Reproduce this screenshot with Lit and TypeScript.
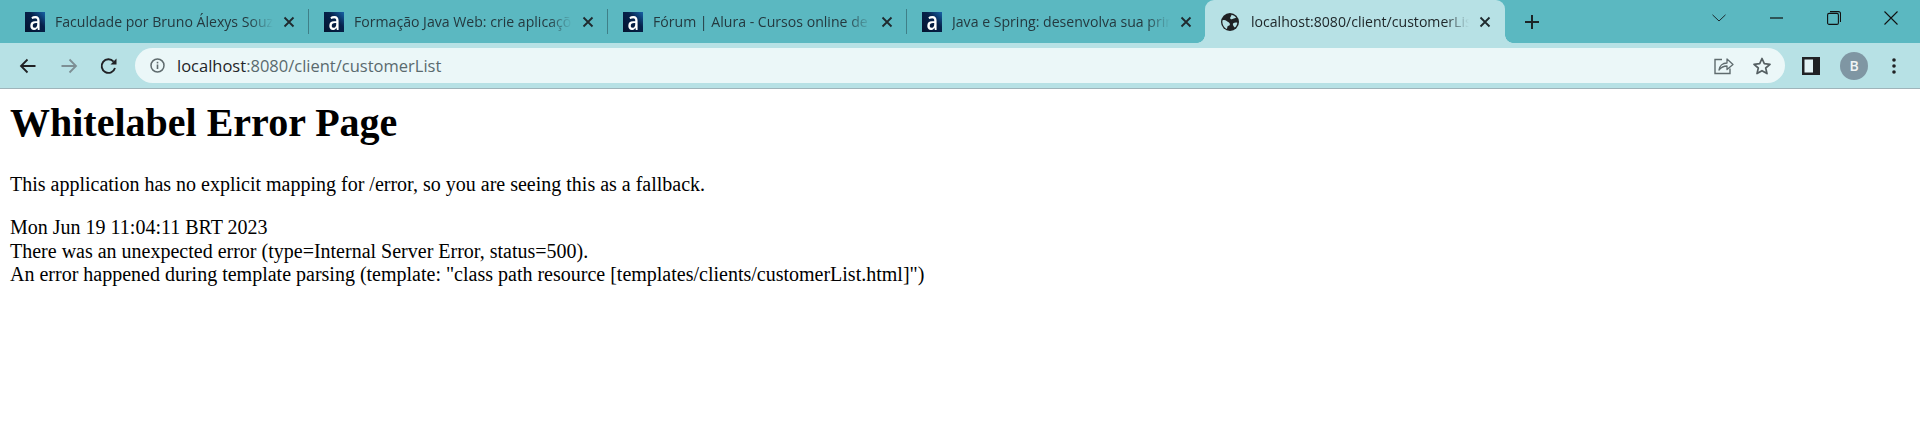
import { LitElement, html, css } from "lit";
import { customElement } from "lit/decorators.js";

const favicon = html`<span class="fav"><span class="fav-a">a</span></span>`;
const closeX = html`<svg class="x" width="12" height="12" viewBox="0 0 12 12"><path d="M1.5 1.5l9 9M10.5 1.5l-9 9" stroke="#1f2a2e" stroke-width="1.8" fill="none"/></svg>`;
const globe = html`<svg class="globe" width="18" height="18" viewBox="0 0 18 18"><circle cx="9" cy="9" r="9" fill="#202124"/><path d="M1.4 7.4c1.600-.7 3.100-.4 4.300.7 1.200 1.100 2.900 1.500 3.200 2.900.2 1.300-1 1.900-2 2-.7.700-.6 2-1 3C3 14.600 1 11 1.400 7.400zM10.500 1.700c1.900.4 3.600 1.500 4.700 3.100-1 .4-2.200.4-3.100 1-.9.600-2.100.6-2.700-.1-.5-.7-.2-1.300.3-2 .4-.6.700-1.200.8-2zM12 10.400c1.100-.8 2.900-1.300 4.300-.7-.2 2-1.100 3.700-2.600 4.900-.7-1-2.400-3-1.700-4.200z" fill="#b7e1e5"/></svg>`;

@customElement("app-root")
export class AppRoot extends LitElement {
  static styles = css`
    :host { display: block; height: 424px; background: #fff; overflow: hidden; color: #000; }
    .strip { height: 43px; background: #5bb8c1; display: flex; align-items: stretch; padding-left: 10px; box-sizing: border-box; font-family: "Open Sans", "Noto Sans", sans-serif; }
    .tab { flex: none; width: 298px; box-sizing: border-box; padding: 0 13px 0 15px; display: flex; align-items: center; gap: 10px; color: #24393f; position: relative; }
    .tab.active { width: 300px; padding: 0 14px 0 16px; gap: 12px; background: #b7e1e5; border-radius: 9px 9px 0 0; color: #20282b; }
    .tab.active .x { margin-left: -2px; }
    .tab.active::before, .tab.active::after { content: ""; position: absolute; bottom: 0; width: 8px; height: 8px; }
    .tab.active::before { left: -8px; background: radial-gradient(circle at 0 0, transparent 7.5px, #b7e1e5 8px); }
    .tab.active::after { right: -8px; background: radial-gradient(circle at 100% 0, transparent 7.5px, #b7e1e5 8px); }
    .sep { flex: none; width: 1px; height: 25px; margin-top: 9px; background: #3f7f88; }
    .title { flex: 1; min-width: 0; white-space: nowrap; overflow: hidden; font-size: 14.1px; line-height: 43px; -webkit-mask-image: linear-gradient(to right, #000 calc(100% - 24px), transparent 100%); mask-image: linear-gradient(to right, #000 calc(100% - 24px), transparent 100%); }
    .fav { flex: none; width: 20px; height: 20px; overflow: hidden; display: flex; align-items: center; justify-content: center; background: linear-gradient(45deg, #04132f 0%, #06214a 60%, #1763a8 100%); }
    .fav-a { color: #fff; font: 600 25px/20px "Open Sans", sans-serif; transform: scaleX(.8); margin-top: -3px; }
    .x { flex: none; }
    .plus { flex: none; margin: 0 0 0 20px; align-self: center; display: flex; }
    .spacer { flex: 1; }
    .win { display: flex; align-items: flex-start; }
    .win-b { width: 57.5px; height: 36px; display: flex; align-items: center; justify-content: center; }
    .bar { height: 45px; background: #b7e1e5; display: flex; align-items: center; box-sizing: border-box; position: relative; }
    .nav { display: flex; align-items: center; width: 135px; box-sizing: border-box; padding-left: 19px; flex: none; }
    .fwd { margin-left: 25px; }
    .rel { margin-left: 21.5px; }
    .omni { flex: none; width: 1650px; height: 35px; background: #ebf7f8; border-radius: 18px; display: flex; align-items: center; box-sizing: border-box; padding-left: 15px; }
    .url { margin-left: 12px; font: 16.5px/35px "Open Sans", "Noto Sans", sans-serif; color: #5a6a6e; white-space: nowrap; }
    .url b { font-weight: 400; color: #1f2528; }
    .omni-r { margin-left: auto; display: flex; align-items: center; gap: 19px; padding-right: 14px; }
    .tools { display: flex; align-items: center; flex: 1; padding-left: 17px; }
    .avatar { width: 28px; height: 28px; border-radius: 50%; background: #7f96a3; color: #f1f5f6; display: flex; align-items: center; justify-content: center; font: 600 14px "Open Sans", sans-serif; margin-left: 20px; }
    .dots { margin-left: 24px; display: flex; }
    .rule { height: 1px; background: #9fb4ba; }
    .page { padding: 11px 10px 10px; font-family: "Liberation Serif", "Times New Roman", serif; font-size: 20px; line-height: 23.4px; }
    h1 { margin: 0 0 26.8px; font-size: 40px; line-height: 46px; font-weight: 700; }
    p { margin: 20px 0; }
  `;

  render() {
    return html`
      <div class="strip">
        <div class="tab">${favicon}<span class="title">Faculdade por Bruno Álexys Souza</span>${closeX}</div>
        <span class="sep"></span>
        <div class="tab">${favicon}<span class="title">Formação Java Web: crie aplicações</span>${closeX}</div>
        <span class="sep"></span>
        <div class="tab">${favicon}<span class="title">Fórum | Alura - Cursos online de tecnologia</span>${closeX}</div>
        <span class="sep"></span>
        <div class="tab">${favicon}<span class="title">Java e Spring: desenvolva sua primeira</span>${closeX}</div>
        <div class="tab active">${globe}<span class="title">localhost:8080/client/customerList</span>${closeX}</div>
        <span class="plus"><svg width="14" height="14" viewBox="0 0 14 14"><path d="M7 0v14M0 7h14" stroke="#1c2528" stroke-width="2" fill="none"/></svg></span>
        <span class="spacer"></span>
        <div class="win">
          <span class="win-b"><svg width="14" height="8" viewBox="0 0 14 8"><path d="M.5.8L7 7l6.5-6.2" stroke="#1b2b30" fill="none"/></svg></span>
          <span class="win-b"><svg width="13" height="2" viewBox="0 0 13 2"><path d="M0 1h13" stroke="#111" stroke-width="1.2" fill="none"/></svg></span>
          <span class="win-b"><svg width="14" height="14" viewBox="0 0 14 14"><rect x=".6" y="2.4" width="10.8" height="11" rx="1.5" stroke="#111" stroke-width="1.1" fill="none"/><path d="M3 .6h8.5a2 2 0 0 1 2 2V11" stroke="#111" stroke-width="1.1" fill="none"/></svg></span>
          <span class="win-b"><svg width="14" height="14" viewBox="0 0 14 14"><path d="M.5.5l13 13M13.5.5l-13 13" stroke="#111" stroke-width="1.1" fill="none"/></svg></span>
        </div>
      </div>
      <div class="bar">
        <div class="nav">
          <svg width="17" height="16" viewBox="0 0 17 16"><path d="M16.5 8H2M8.5 1.5L2 8l6.5 6.5" stroke="#202124" stroke-width="1.8" fill="none"/></svg>
          <svg class="fwd" width="17" height="16" viewBox="0 0 17 16"><path d="M.5 8H15M8.5 1.5L15 8l-6.5 6.5" stroke="#7d8f94" stroke-width="1.8" fill="none"/></svg>
          <svg class="rel" width="18" height="18" viewBox="0 0 18 18"><path d="M15 11a6.8 6.8 0 1 1-1.4-6.4" stroke="#202124" stroke-width="1.9" fill="none"/><path d="M16.5 1.5v6h-6z" fill="#202124"/></svg>
        </div>
        <div class="omni">
          <svg width="15" height="15" viewBox="0 0 15 15"><circle cx="7.5" cy="7.5" r="6.5" stroke="#5f6b6e" stroke-width="1.5" fill="none"/><rect x="6.7" y="6.5" width="1.6" height="4.5" fill="#5f6b6e"/><rect x="6.7" y="3.8" width="1.6" height="1.6" fill="#5f6b6e"/></svg>
          <span class="url"><b>localhost</b>:8080/client/customerList</span>
          <div class="omni-r">
            <svg width="20" height="19" viewBox="0 0 20 19"><path d="M8 3.5H1v14h15v-5" stroke="#5f6b6e" stroke-width="1.4" fill="none"/><path d="M5 14c.5-4 3.5-7 8-7V3l6 5.5-6 5V10c-3.5 0-6 1.5-8 4z" stroke="#5f6b6e" stroke-width="1.3" fill="none" stroke-linejoin="round"/></svg>
            <svg width="18" height="18" viewBox="0 0 18 18"><path d="M9 1.5l2.3 5.2 5.700.6-4.300 3.700 1.300 5.600L9 13.700 4 16.600l1.300-5.600L1 7.300l5.700-.6z" stroke="#555f62" stroke-width="1.7" fill="none" stroke-linejoin="round"/></svg>
          </div>
        </div>
        <div class="tools">
          <svg width="18" height="18" viewBox="0 0 18 18"><rect width="18" height="18" fill="#202124"/><rect x="2.5" y="2.5" width="8.5" height="13" fill="#e3f3f5"/></svg>
          <span class="avatar">B</span>
          <span class="dots"><svg width="4" height="16" viewBox="0 0 4 16"><circle cx="2" cy="2" r="1.8" fill="#202124"/><circle cx="2" cy="8" r="1.8" fill="#202124"/><circle cx="2" cy="14" r="1.8" fill="#202124"/></svg></span>
        </div>
      </div>
      <div class="rule"></div>
      <div class="page">
        <h1>Whitelabel Error Page</h1>
        <p>This application has no explicit mapping for /error, so you are seeing this as a fallback.</p>
        <div>Mon Jun 19 11:04:11 BRT 2023</div>
        <div>There was an unexpected error (type=Internal Server Error, status=500).</div>
        <div>An error happened during template parsing (template: "class path resource [templates/clients/customerList.html]")</div>
      </div>
    `;
  }
}
